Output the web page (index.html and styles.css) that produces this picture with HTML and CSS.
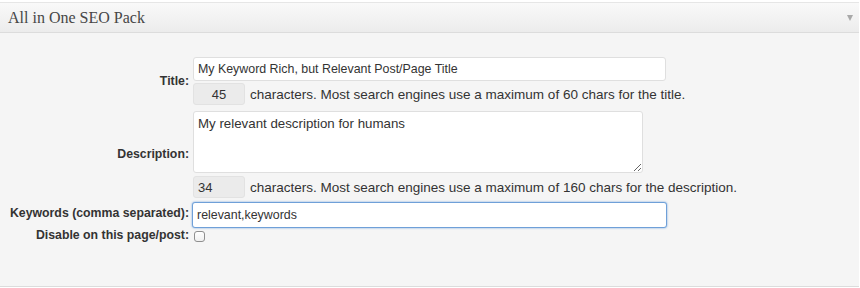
FILE: index.html
```html
<!DOCTYPE html>
<html lang="en">
<head>
    <meta charset="UTF-8">
    <title>All in One SEO Pack</title>
    <link rel="stylesheet" href="styles.css">
</head>
<body>
    <div class="postbox">
        <div class="hndle">
            <h3>All in One SEO Pack</h3>
            <span class="toggle"></span>
        </div>
        <div class="inside">
            <div class="form">
                <label class="lbl" for="aio-title">Title:</label>
                <div class="field">
                    <input type="text" id="aio-title" class="text title-input" value="My Keyword Rich, but Relevant Post/Page Title">
                    <div class="count-row">
                        <input type="text" class="count center" value="45" readonly>
                        <span>characters. Most search engines use a maximum of 60 chars for the title.</span>
                    </div>
                </div>

                <label class="lbl desc-lbl" for="aio-desc">Description:</label>
                <div class="field desc-field">
                    <textarea id="aio-desc">My relevant description for humans</textarea>
                    <div class="count-row">
                        <input type="text" class="count" value="34" readonly>
                        <span>characters. Most search engines use a maximum of 160 chars for the description.</span>
                    </div>
                </div>

                <label class="lbl" for="aio-keys">Keywords (comma separated):</label>
                <div class="field keys-field">
                    <input type="text" id="aio-keys" class="text keys-input focus" value="relevant,keywords">
                </div>

                <label class="lbl" for="aio-disable">Disable on this page/post:</label>
                <div class="field check-field">
                    <input type="checkbox" id="aio-disable" class="check">
                </div>
            </div>
        </div>
    </div>
</body>
</html>
```

FILE: styles.css
```css
* {
    box-sizing: border-box;
    margin: 0;
    padding: 0;
}
body {
    background-color: #fff;
    font-family: "Liberation Sans", Arial, sans-serif;
    font-size: 13.5px;
    color: #333;
    padding-top: 2px;
}
.postbox {
    width: 859px;
    height: 285px;
    background-color: #f5f5f5;
    border-top: 1px solid #e6e6e6;
    border-bottom: 1px solid #dcdcdc;
}
.hndle {
    display: flex;
    align-items: center;
    justify-content: space-between;
    height: 30px;
    padding: 0 6px 0 8px;
    background: linear-gradient(#f9f9f9, #ececec);
    border-bottom: 1px solid #dcdcdc;
}
.hndle h3 {
    font-family: "Liberation Serif", Georgia, serif;
    font-size: 16px;
    font-weight: normal;
    color: #464646;
}
.toggle {
    width: 0;
    height: 0;
    border-left: 3.5px solid transparent;
    border-right: 3.5px solid transparent;
    border-top: 6px solid #a9a9a9;
}
.inside {
    padding-top: 24px;
}
.form {
    display: grid;
    grid-template-columns: 189px 1fr;
    column-gap: 4px;
    align-items: center;
}
.lbl {
    text-align: right;
    font-size: 12.3px;
    font-weight: bold;
    color: #333;
    white-space: nowrap;
}
.field {
    display: flex;
    flex-direction: column;
    gap: 2px;
}
.desc-field {
    margin-top: 6px;
    gap: 3px;
}
.keys-field {
    margin-top: 4px;
}
.check-field {
    margin-top: 3px;
}
.desc-lbl {
    margin-top: 4px;
}
.text {
    font-family: inherit;
    font-size: 12.4px;
    color: #333;
    background-color: #fff;
    border: 1px solid #dfdfdf;
    border-radius: 3px;
    padding: 0 4px;
    outline: none;
}
.title-input {
    width: 473px;
    height: 24px;
}
.count-row {
    display: flex;
    align-items: center;
    gap: 5px;
}
.count {
    width: 52px;
    height: 22px;
    font-family: inherit;
    font-size: 13px;
    color: #333;
    background-color: #ebebeb;
    border: 1px solid #e2e2e2;
    border-radius: 3px;
    padding: 0 4px;
    outline: none;
}
.count.center {
    text-align: center;
}
textarea {
    width: 450px;
    height: 62px;
    font-family: inherit;
    font-size: 13.3px;
    color: #333;
    background-color: #fff;
    border: 1px solid #dfdfdf;
    border-radius: 3px;
    padding: 4px 4px;
    outline: none;
    resize: both;
}
.keys-input {
    width: 475px;
    height: 26px;
    margin-left: -1px;
}
.focus {
    border: 1px solid #6fa0d8;
    box-shadow: 0 0 2px rgba(90, 150, 220, 0.9);
}
.check {
    appearance: none;
    width: 11px;
    height: 11px;
    border: 1px solid #8f8f8f;
    border-radius: 3px;
    background: linear-gradient(#fff, #f0f0f0);
    margin: -1px 0 0 1px;
}
```
